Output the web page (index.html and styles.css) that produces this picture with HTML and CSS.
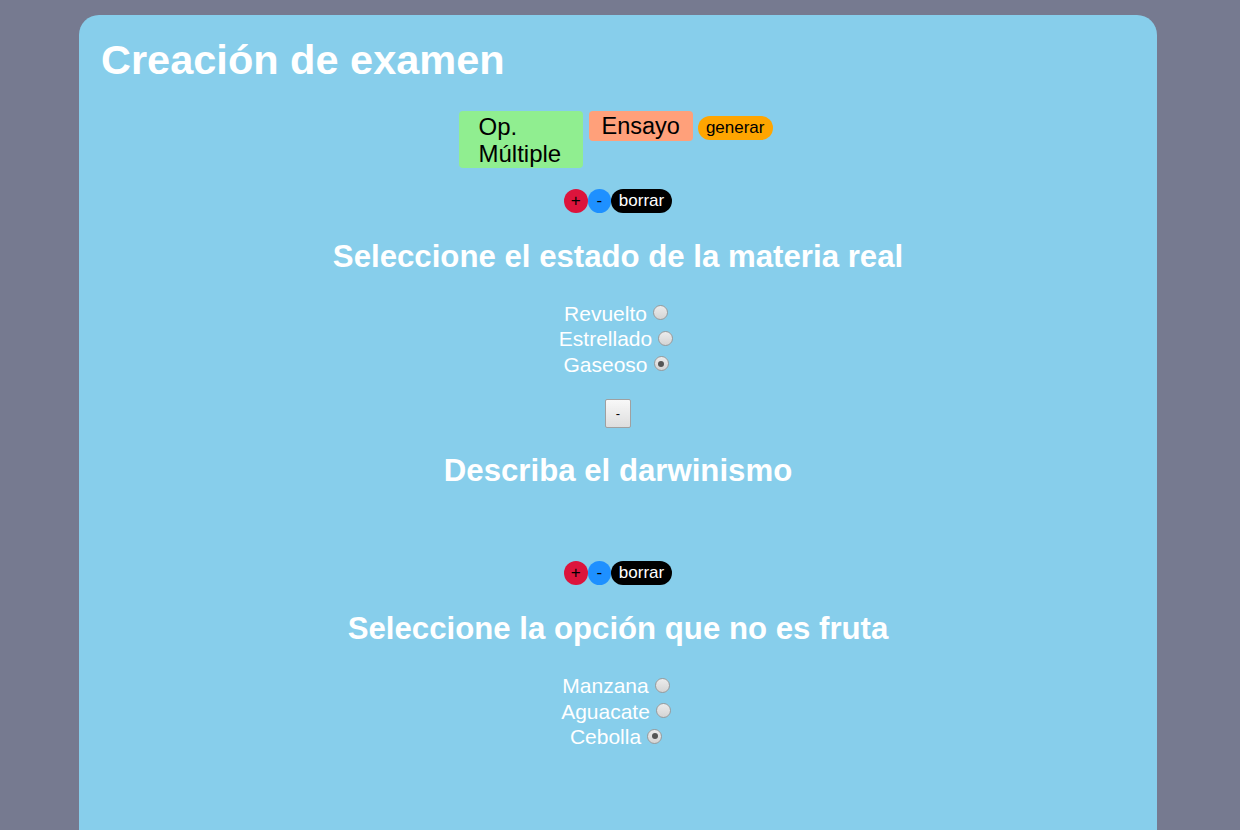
FILE: index.html
```html
<!DOCTYPE html>
<html lang="es">
<head>
<meta charset="utf-8">
<title>Creación de examen</title>
<link rel="stylesheet" href="styles.css">
</head>
<body>
<main class="panel">
  <h1 class="title">Creación de examen</h1>
  <div class="types">
    <button class="type type-multi">Op. Múltiple</button>
    <button class="type type-essay">Ensayo</button>
    <button class="generate">generar</button>
  </div>

  <section class="question">
    <div class="tools tools-first">
      <button class="tool plus">+</button><button class="tool minus">-</button><button class="tool delete">borrar</button>
    </div>
    <h2 class="q-title q-first">Seleccione el estado de la materia real</h2>
    <div class="options">
      <label class="option">Revuelto <input type="radio" name="q1"></label>
      <label class="option">Estrellado <input type="radio" name="q1"></label>
      <label class="option">Gaseoso <input type="radio" name="q1" checked></label>
    </div>
  </section>

  <section class="question essay">
    <button class="small-btn">-</button>
    <h2 class="q-title">Describa el darwinismo</h2>
    <div class="essay-space"></div>
  </section>

  <section class="question">
    <div class="tools">
      <button class="tool plus">+</button><button class="tool minus">-</button><button class="tool delete">borrar</button>
    </div>
    <h2 class="q-title q-last">Seleccione la opción que no es fruta</h2>
    <div class="options">
      <label class="option">Manzana <input type="radio" name="q3"></label>
      <label class="option">Aguacate <input type="radio" name="q3"></label>
      <label class="option">Cebolla <input type="radio" name="q3" checked></label>
    </div>
  </section>
</main>
</body>
</html>
```
FILE: styles.css
```css
html, body {
  margin: 0;
  padding: 0;
  background: #767a90;
  font-family: "Liberation Sans", Arial, sans-serif;
  overflow: hidden;
}
body {
  padding-top: 15px;
  padding-left: 79px;
}
.panel {
  width: 1078px;
  min-height: 900px;
  box-sizing: border-box;
  background: #87ceeb;
  border-radius: 20px;
  padding: 20px 22px;
  color: #fff;
}
.title {
  margin: 0;
  font-size: 41.5px;
  font-weight: bold;
  line-height: 50px;
}
.types {
  display: flex;
  justify-content: center;
  align-items: flex-start;
  gap: 6px;
  margin-top: 26px;
}
button {
  font-family: "Liberation Sans", Arial, sans-serif;
  border: none;
  cursor: pointer;
}
.type {
  font-size: 24px;
  line-height: 27px;
  color: #000;
  border-radius: 4px;
  padding: 1.5px 20px;
  text-align: left;
}
.type-multi {
  background: #90ee90;
  width: 124px;
}
.type-essay {
  background: #ffa07a;
  padding: 1.5px 13px;
  font-size: 23.5px;
}
.generate {
  background: #ffa500;
  color: #000;
  font-size: 17px;
  line-height: 24px;
  padding: 0 8px;
  border-radius: 12px;
  margin-top: 5px;
  margin-left: -1px;
  margin-right: 5px;
}
.question {
  display: flex;
  flex-direction: column;
  align-items: center;
}
.tools {
  display: flex;
  margin-top: 22px;
}
.tools-first {
  margin-top: 21px;
}
.tool {
  height: 24px;
  font-size: 17px;
  line-height: 24px;
  padding: 0;
  border-radius: 12px;
}
.plus {
  width: 24px;
  background: #dc143c;
  color: #000;
}
.minus {
  width: 23px;
  background: #1e90ff;
  color: #000;
}
.delete {
  background: #000;
  color: #fff;
  padding: 0 8px;
}
.q-title {
  font-size: 31.2px;
  font-weight: bold;
  margin: 26px 0 0;
  line-height: 34px;
}
.q-first {
  margin-top: 27px;
}
.q-last {
  margin-top: 27px;
}
.options {
  display: flex;
  flex-direction: column;
  align-items: center;
  margin-top: 26.5px;
}
.q-last + .options {
  margin-top: 27px;
}
.option {
  font-size: 21px;
  line-height: 25.5px;
  display: flex;
  align-items: center;
  gap: 6px;
}
.option input {
  appearance: none;
  -webkit-appearance: none;
  margin: -1px 4px 0 0;
  width: 15px;
  height: 15px;
  border-radius: 50%;
  border: 1px solid #9a9a9a;
  background: linear-gradient(#ececec, #d4d4d4);
  box-sizing: border-box;
  position: relative;
}
.option input:checked::after {
  content: "";
  position: absolute;
  left: 3.5px;
  top: 3.5px;
  width: 6px;
  height: 6px;
  border-radius: 50%;
  background: #555;
}
.small-btn {
  margin-top: 22px;
  width: 26px;
  height: 29px;
  font-size: 13px;
  color: #000;
  border: 1px solid #a0a0a0;
  border-radius: 2px;
  background: linear-gradient(#f8f8f8, #dedede);
  padding: 0;
}
.essay .q-title {
  margin-top: 26px;
}
.essay-space {
  height: 51px;
}
```
